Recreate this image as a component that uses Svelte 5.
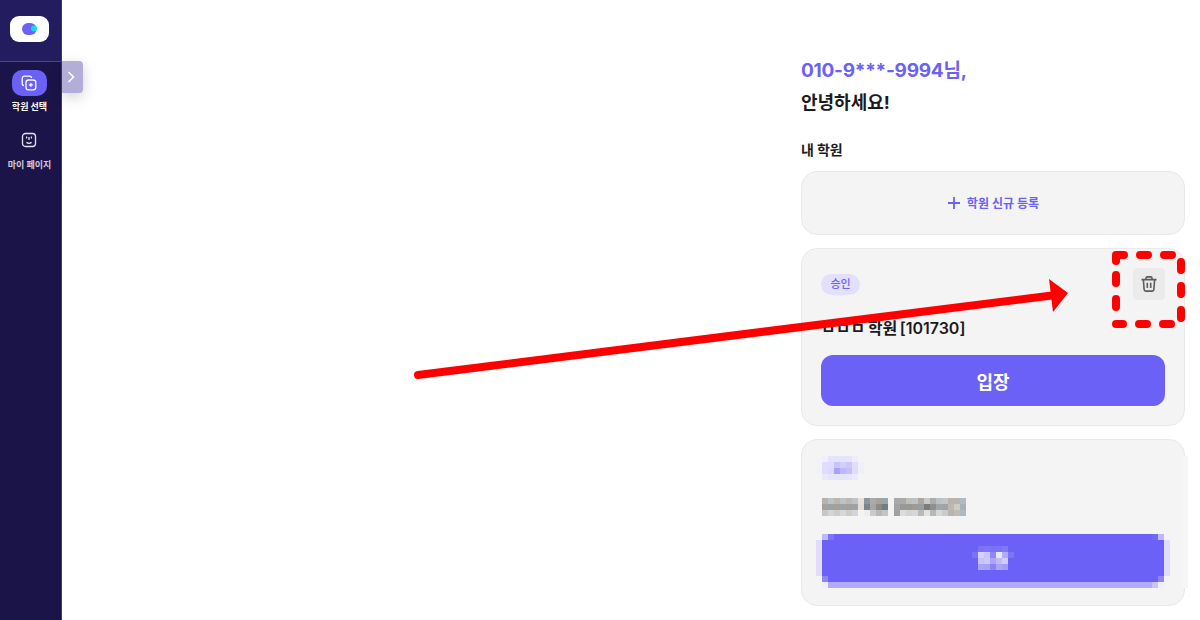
<script>
  // Pixelated (redacted) regions of the last card: each row is [y, startX, colours...]; blocks are 6px
  const rows = [
    [456, 822, '#f0effa', '#e6e3fc', '#e6e3fc', '#e6e3fc', '#e6e3fc', '#eeedf9'],
    [462, 816, '#f3f3f6', '#e0dcfd', '#e0dcfd', '#c9c2fb', '#d4cefc', '#ccc6fb', '#e0dcfc', '#f0effa'],
    [468, 816, '#f2f2f5', '#e0dcfd', '#dcd8fd', '#a9a0f8', '#bfb8fa', '#c5befa', '#e0dcfd', '#efeef9'],
    [474, 822, '#ebe9fb', '#e6e3fc', '#e6e3fc', '#e6e3fc', '#e6e3fc', '#ebe9fb'],
    [498, 822, '#b5b3ae', '#bcc3c5', '#bab8ad', '#bcc3c7', '#bdb9b2', '#bcc4c8', '#e6e0d8', '#8d969c', '#aaaaaa', '#a8a39a', '#99a5ab', '#f3f3f3', '#a9a9a9', '#abaaaa', '#c2bfb9', '#bfc2c2', '#ada79e', '#c9c9c6', '#a9adb0', '#bdc1c2', '#c0c5c6', '#b9b4ab', '#b8b3ab', '#b0bcc4'],
    [504, 822, '#a2a2a0', '#a0a0a0', '#a1a09e', '#a0a1a1', '#a1a09e', '#a1a1a1', '#e2ddd6', '#7d858b', '#a6a6a6', '#8b8a86', '#767d80', '#f3f3f3', '#a3a3a3', '#979899', '#979795', '#9f9b92', '#95a0a6', '#7f7b78', '#8f8f8e', '#a0a5a8', '#9da4a8', '#bdb7ae', '#cfcbc3', '#a5b0b9'],
    [510, 822, '#c8c6c0', '#cfd5d8', '#cdccc4', '#d3d8da', '#cfccc6', '#d0d6da', '#f3f3f3', '#eeeeee', '#cbcbcb', '#b9b8b5', '#c0c5c8', '#f3f3f3', '#a0a0a0', '#dcdcdc', '#d5d3ce', '#d4d8da', '#bcb9b2', '#e2e2e0', '#b4b8ba', '#d6d8d8', '#c8ccce', '#bab5ac', '#c0bcb3', '#aeb9c2'],
    [534, 822, '#bfb8f9', '#7c73f5'],
    [534, 1152, '#7268f6', '#bfb8f9'],
    [546, 978, '#7b72f6', '#7d74f6', '#7a71f6', '#7b72f6', '#8178f6'],
    [552, 972, '#7b72f6', '#d6d2fb', '#c9c4fb', '#8f87f7', '#e8e6fd', '#b3adf9', '#7e75f6'],
    [558, 978, '#c7c2fb', '#cdc8fb', '#aca4f9', '#c0baf9', '#d0ccfb'],
    [564, 978, '#aaa3f8', '#a8a1f8', '#8b82f7', '#aba4f8', '#a59ef8'],
    [576, 822, '#8e85f6'],
    [576, 1158, '#8e85f6'],
    [582, 822, '#f0eefa'],
    [582, 1152, '#c8c3f9', '#efeef9']
  ];
  const blocks = rows.flatMap(([y, x, ...colours]) =>
    colours.map((fill, i) => ({ x: x + i * 6, y, fill }))
  );
</script>

<div class="page">
  <aside class="sidebar">
    <div class="brand">
      <div class="logo">
        <svg width="18" height="14" viewBox="0 0 18 14" aria-hidden="true">
          <rect x="1" y="1" width="14.5" height="12" rx="6" fill="#6c61f6" />
          <circle cx="13" cy="6.6" r="3" fill="#12d6ee" />
        </svg>
      </div>
    </div>
    <nav class="nav">
      <div class="nav-item active">
        <div class="pill">
          <svg width="18" height="18" viewBox="0 0 18 18" fill="none" stroke="#fff" stroke-width="1.3" aria-hidden="true">
            <path d="M4 11.6A2.2 2.2 0 0 1 2.2 9.4V4.4A2.2 2.2 0 0 1 4.4 2.2h5a2.2 2.2 0 0 1 2.2 1.8" />
            <rect x="6" y="6" width="9.8" height="9.8" rx="2.6" />
            <path d="M10.9 8.9v3.9M8.9 10.9h3.9" />
          </svg>
        </div>
        <span>학원 선택</span>
      </div>
      <div class="nav-item">
        <div class="face">
          <svg width="16" height="16" viewBox="0 0 16 16" fill="none" stroke="#e4e2ee" stroke-width="1.3" aria-hidden="true">
            <rect x="1.5" y="1.5" width="13" height="13" rx="3" />
            <path d="M5.6 4.6v2M10.4 4.6v2M8 5v3M5.4 10.4c1.4 1 3.8 1 5.2 0" />
          </svg>
        </div>
        <span>마이 페이지</span>
      </div>
    </nav>
  </aside>

  <button class="toggle" aria-label="메뉴 펼치기">
    <svg width="10" height="14" viewBox="0 0 10 14" fill="none" stroke="#fff" stroke-width="1.5" aria-hidden="true">
      <path d="M2.5 2l5 5-5 5" />
    </svg>
  </button>

  <main class="main">
    <section class="column">
      <h1 class="phone">010-9***-9994님,</h1>
      <h2 class="hello">안녕하세요!</h2>
      <h3 class="label">내 학원</h3>

      <div class="card add">
        <svg width="14" height="14" viewBox="0 0 14 14" stroke="#6c61f6" stroke-width="1.8" aria-hidden="true">
          <path d="M7 1v12M1 7h12" />
        </svg>
        <span>학원 신규 등록</span>
      </div>

      <div class="card academy">
        <div class="top">
          <span class="badge">승인</span>
          <div class="trash">
            <svg width="18" height="18" viewBox="0 0 18 18" fill="none" stroke="#5c5c5c" stroke-width="1.6" aria-hidden="true">
              <path d="M1.5 4.6h15M6 4.4V3.2c0-.8.5-1.3 1.3-1.3h3.4c.8 0 1.3.5 1.3 1.3v1.2" />
              <path d="M3.4 4.8l.7 9.6c.1 1 .8 1.7 1.7 1.7h6.4c.9 0 1.6-.7 1.7-1.7l.7-9.6" />
              <path d="M7.3 7.8v5.2M10.7 7.8v5.2" />
            </svg>
          </div>
        </div>
        <div class="name">ㅁㅁㅁ 학원 [101730]</div>
        <button class="enter">입장</button>
      </div>

      <div class="card redacted"></div>
    </section>
  </main>

  <svg class="overlay" width="1200" height="620" viewBox="0 0 1200 620" aria-hidden="true">
    <g shape-rendering="crispEdges">
      <rect x="822" y="534" width="342" height="48" fill="#6c61f6" />
      <rect x="816" y="540" width="6" height="36" fill="#e0ddfb" />
      <rect x="1164" y="540" width="6" height="36" fill="#e0ddfb" />
      <rect x="828" y="582" width="324" height="6" fill="#b3abf7" />
      <rect x="1182" y="456" width="6" height="132" fill="#f6f6f6" />
      {#each blocks as b}
        <rect x={b.x} y={b.y} width="6" height="6" fill={b.fill} />
      {/each}
    </g>
    <g fill="none" stroke="#ff0000" stroke-width="8" stroke-linecap="round" stroke-linejoin="round">
      <path d="M1116 261V255H1124" />
      <path d="M1140 255h8M1164 255h8" />
      <path d="M1181 262v8M1181 286v8M1181 310v8" />
      <path d="M1171 324h-8M1147 324h-8M1123 324h-7" />
      <path d="M1116 307v-8M1116 283v-8" />
      <path d="M418 375L1056 295" />
    </g>
    <polygon points="1068,293 1049,279 1053,312" fill="#ff0000" />
  </svg>
</div>

<style>
  :global(body) {
    margin: 0;
    background: #fff;
    overflow: hidden;
  }

  .page {
    position: relative;
    display: flex;
    width: 1200px;
    height: 620px;
    overflow: hidden;
    font-family: Inter, "Noto Sans CJK KR", sans-serif;
    color: #1b1b1f;
  }

  .sidebar {
    flex: 0 0 61px;
    width: 61px;
    background: #1b1449;
    border-right: 1px solid #3f3a63;
    display: flex;
    flex-direction: column;
  }

  .brand {
    height: 62px;
    box-sizing: border-box;
    background: #231c5e;
    border-bottom: 1px solid #4e4a72;
    padding: 16px 0 0 10px;
  }

  .logo {
    width: 39px;
    height: 26px;
    box-sizing: border-box;
    padding-left: 11px;
    border-radius: 9px;
    background: #fff;
    display: flex;
    align-items: center;
    justify-content: flex-start;
  }

  .nav {
    display: flex;
    flex-direction: column;
    align-items: center;
    padding: 8px 2px 0 0;
    gap: 14px;
  }

  .nav-item {
    display: flex;
    flex-direction: column;
    align-items: center;
    gap: 4px;
    font-size: 9px;
    line-height: 13px;
    font-weight: 700;
    color: #cfccdf;
    white-space: nowrap;
  }

  .nav-item.active {
    color: #fff;
  }

  .pill {
    width: 35px;
    height: 26px;
    border-radius: 10px;
    background: #6c61f6;
    display: flex;
    align-items: center;
    justify-content: center;
  }

  .face {
    height: 26px;
    margin-bottom: 1px;
    display: flex;
    align-items: center;
    justify-content: center;
  }

  .toggle {
    position: absolute;
    left: 62px;
    top: 61px;
    width: 21px;
    height: 32px;
    padding: 0 4px 0 0;
    border: 0;
    border-radius: 0 4px 4px 0;
    background: #b3aed8;
    box-shadow: 0 4px 14px rgba(0, 0, 0, 0.18);
    display: flex;
    align-items: center;
    justify-content: center;
  }

  .main {
    flex: 1;
    display: flex;
    justify-content: flex-end;
    padding-right: 15px;
  }

  .column {
    width: 384px;
    padding-top: 58px;
    display: flex;
    flex-direction: column;
  }

  .phone {
    margin: 0;
    font-size: 19px;
    line-height: 26px;
    font-weight: 700;
    letter-spacing: -0.25px;
    color: #6c61f6;
  }

  .hello {
    margin: 5px 0 0;
    font-size: 18px;
    line-height: 27px;
    font-weight: 700;
  }

  .label {
    margin: 24px 0 0;
    font-size: 14px;
    line-height: 20px;
    font-weight: 600;
    letter-spacing: -0.2px;
  }

  .card {
    box-sizing: border-box;
    background: #f4f4f4;
    border: 1px solid #e9e9e9;
    border-radius: 16px;
  }

  .add {
    margin-top: 11px;
    height: 64px;
    padding-bottom: 2px;
    display: flex;
    align-items: center;
    justify-content: center;
    gap: 6px;
    font-size: 12px;
    font-weight: 600;
    color: #6c61f6;
  }

  .add svg {
    margin-top: 2px;
  }

  .academy {
    margin-top: 13px;
    height: 178px;
    padding: 19px 19px 19px;
    display: flex;
    flex-direction: column;
  }

  .top {
    display: flex;
    justify-content: space-between;
    align-items: flex-start;
  }

  .badge {
    margin-top: 6px;
    height: 21px;
    width: 39px;
    border-radius: 11px;
    background: #e3e0fd;
    color: #6c61f6;
    font-size: 11px;
    line-height: 21px;
    font-weight: 500;
    text-align: center;
  }

  .trash {
    width: 32px;
    height: 32px;
    border-radius: 4px;
    background: #ebebeb;
    display: flex;
    align-items: center;
    justify-content: center;
  }

  .name {
    margin-top: 16px;
    font-size: 16px;
    line-height: 24px;
    font-weight: 600;
    word-spacing: -1.5px;
  }

  .enter {
    margin-top: auto;
    height: 51px;
    border: 0;
    border-radius: 12px;
    background: #6c61f6;
    color: #fff;
    font: inherit;
    font-size: 18px;
    font-weight: 700;
  }

  .redacted {
    margin-top: 13px;
    height: 167px;
  }

  .overlay {
    position: absolute;
    left: 0;
    top: 0;
    pointer-events: none;
  }
</style>
